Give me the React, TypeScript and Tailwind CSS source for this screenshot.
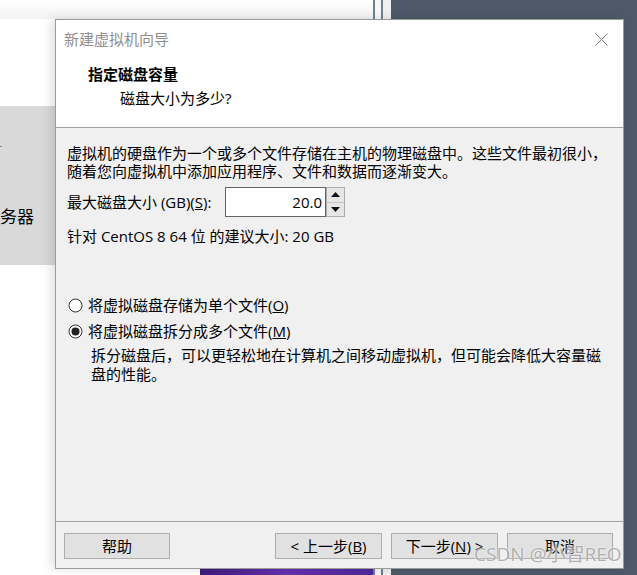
import React from 'react'

const font = { fontFamily: '"Open Sans", "Noto Sans CJK SC", sans-serif' }

function Radio({ checked }: { checked?: boolean }) {
  return (
    <svg width="15" height="15" viewBox="0 0 15 15" className="shrink-0">
      <circle cx="7.5" cy="7.5" r="6.5" fill="#fff" stroke="#333" strokeWidth="1" />
      {checked && <circle cx="7.5" cy="7.5" r="4" fill="#222" />}
    </svg>
  )
}

function Btn({ children, className = '' }: { children: React.ReactNode; className?: string }) {
  return (
    <div
      className={`h-[26px] w-[106px] bg-[#e1e1e1] border border-[#adadad] flex items-center justify-center text-[15px] text-black ${className}`}
    >
      {children}
    </div>
  )
}

export default function App() {
  return (
    <div className="relative w-[637px] h-[575px] overflow-hidden bg-white" style={font}>
      {/* desktop behind the dialog */}
      <div className="absolute left-0 top-0 w-[373px] h-[19px] bg-gradient-to-b from-white to-[#f2f2f2]" />
      <div className="absolute left-[373px] top-0 bottom-0 w-[2px] bg-[#6a8197]" />
      <div className="absolute left-[375px] top-0 bottom-0 w-[6px] bg-[#f7f7f7]" />
      <div className="absolute left-[381px] top-0 bottom-0 w-[2px] bg-[#6a8197]" />
      <div className="absolute left-[383px] top-0 bottom-0 w-[8px] bg-[#f0f0f0]" />
      <div className="absolute left-[391px] top-0 bottom-0 right-0 bg-[#4e5968]" />
      <div className="absolute left-0 top-[106px] w-[60px] h-[159px] bg-[#d9d9d9] overflow-hidden">
        <div className="absolute left-0 top-[40px] w-[2px] h-[1px] bg-[#888]" />
        <div className="absolute left-[-17px] top-[99px] text-[17px] leading-[24px] text-black whitespace-nowrap">
          服务器
        </div>
      </div>
      <div className="absolute left-[200px] top-[568px] w-[173px] h-[7px] bg-gradient-to-r from-[#3b1d7a] via-[#6a2fb0] to-[#4a2a9a]" />

      {/* wizard dialog */}
      <div className="absolute left-[55px] top-[19px] w-[569px] h-[550px] border border-[#9b9b9b] bg-[#f0f0f0] flex flex-col shadow-[-4px_0_10px_rgba(0,0,0,0.12)]">
        <div className="h-[38px] bg-white flex items-center justify-between pl-[8px] pr-[15px]">
          <span className="text-[15px] leading-[20px] -mt-[1px] text-[#8f8f8f]">新建虚拟机向导</span>
          <svg width="13" height="13" viewBox="0 0 13 13">
            <path d="M0.5 0.5 L12.5 12.5 M12.5 0.5 L0.5 12.5" stroke="#777" strokeWidth="1" />
          </svg>
        </div>
        <div className="h-[70px] bg-white pt-[6px] border-b border-[#a0a0a0]">
          <div className="pl-[32px] h-[20px] leading-[20px] text-[15px] font-bold text-black">指定磁盘容量</div>
          <div className="pl-[64px] mt-[4px] h-[20px] leading-[20px] text-[15px] text-black">磁盘大小为多少?</div>
        </div>

        <div className="flex-1 pl-[11px] pt-[16px] text-[15px] text-black">
          <p className="leading-[18px]">
            虚拟机的硬盘作为一个或多个文件存储在主机的物理磁盘中。这些文件最初很小，
            <br />
            随着您向虚拟机中添加应用程序、文件和数据而逐渐变大。
          </p>
          <div className="mt-[7px] h-[30px] flex items-center">
            <span className="w-[158px]">
              最大磁盘大小 (GB)(<span className="underline">S</span>):
            </span>
            <div className="h-[30px] w-[101px] bg-white border border-[#646464] flex items-center justify-end pr-[3px]">
              20.0
            </div>
            <div className="h-[30px] w-[19px] flex flex-col border border-[#adadad] bg-[#e6e6e6]">
              <div className="flex-1 flex items-center justify-center border-b border-[#c4c4c4]">
                <svg width="9" height="5" viewBox="0 0 9 5">
                  <path d="M4.5 0 L9 5 L0 5 Z" fill="#111" />
                </svg>
              </div>
              <div className="flex-1 flex items-center justify-center">
                <svg width="9" height="5" viewBox="0 0 9 5">
                  <path d="M0 0 L9 0 L4.5 5 Z" fill="#111" />
                </svg>
              </div>
            </div>
          </div>
          <div className="mt-[10px] leading-[18px]">针对 CentOS 8 64 位 的建议大小: 20 GB</div>

          <div className="mt-[51px] h-[18px] flex items-center gap-[5px] ml-[1px]">
            <Radio />
            <span>
              将虚拟磁盘存储为单个文件(<span className="underline">O</span>)
            </span>
          </div>
          <div className="mt-[8px] h-[18px] flex items-center gap-[5px] ml-[1px]">
            <Radio checked />
            <span>
              将虚拟磁盘拆分成多个文件(<span className="underline">M</span>)
            </span>
          </div>
          <p className="mt-[6px] pl-[24px] leading-[19px]">
            拆分磁盘后，可以更轻松地在计算机之间移动虚拟机，但可能会降低大容量磁
            <br />
            盘的性能。
          </p>
        </div>

        <div className="h-[47px] border-t border-[#a0a0a0] pt-[11px] pl-[8px] pr-[10px] flex items-start">
          <Btn>帮助</Btn>
          <div className="ml-auto flex gap-[9px]">
            <Btn className="w-[107px]">
              &lt; 上一步(<span className="underline">B</span>)
            </Btn>
            <Btn className="w-[107px]">
              下一步(<span className="underline">N</span>) &gt;
            </Btn>
            <Btn>取消</Btn>
          </div>
        </div>
      </div>

      <div className="absolute left-[474px] top-[542px] text-[19px] leading-[24px] text-[#9c9c9c]/80 whitespace-nowrap [text-shadow:0_0_2px_#fff]">
        CSDN @小智REO
      </div>
    </div>
  )
}
